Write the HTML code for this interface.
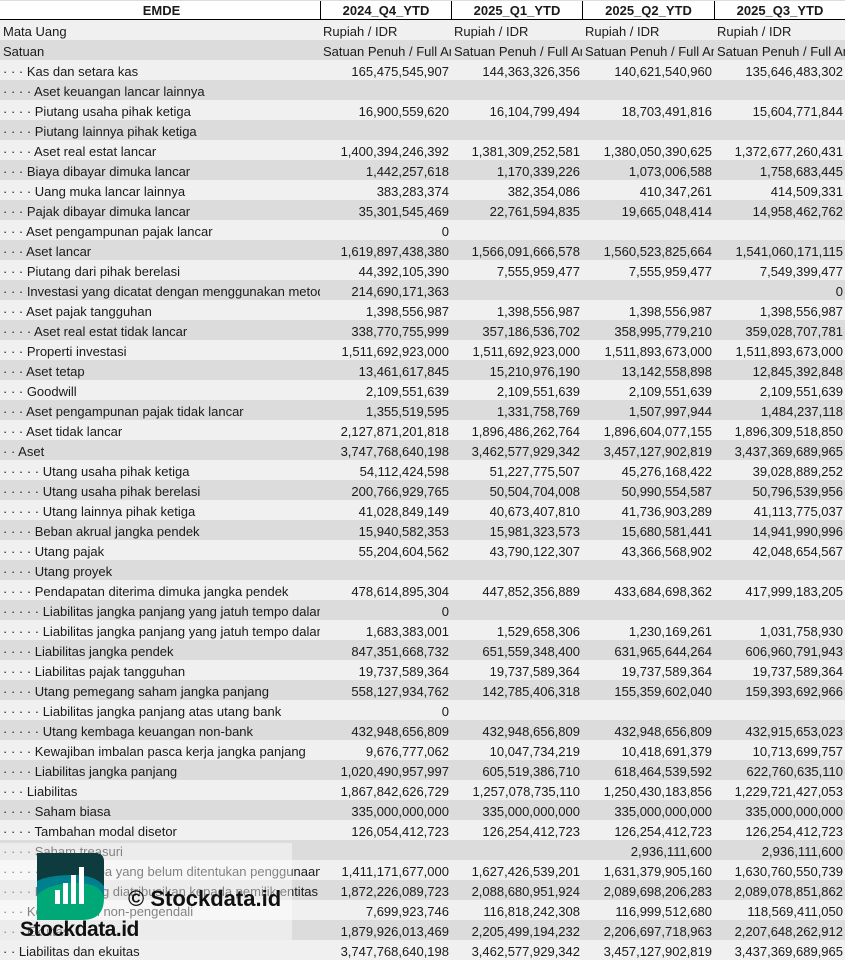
<!DOCTYPE html>
<html><head><meta charset="utf-8"><style>
*{margin:0;padding:0;box-sizing:border-box}
body{width:845px;height:961px;overflow:hidden;background:#fff;font-family:"Liberation Sans",sans-serif;font-size:13px;color:#1a1a1a;position:relative}
.r{position:absolute;left:0;width:845px;height:20px;display:flex}
.r div{height:20px;line-height:23px;overflow:hidden;white-space:nowrap}
.c0{width:320px;padding-left:3px}
.c1{width:131px}.c2{width:131px}.c3{width:132px}.c4{width:131px}
.n{text-align:right;padding-right:2px}
.l{background:#f0f0f0}.d{background:#dcdcdc}
.h{top:0;background:#fff;border-top:1px solid #ddd;border-bottom:1px solid #000;font-weight:bold}
.h div{text-align:center;line-height:20px;border-left:1px solid #000}
.h div:first-child{border-left:none}
.ov{position:absolute;left:0;top:843px;width:292px;height:97px;background:rgba(255,255,255,0.45)}
</style></head><body>
<div class="r h"><div class="c0">EMDE</div><div class="c1">2024_Q4_YTD</div><div class="c2">2025_Q1_YTD</div><div class="c3">2025_Q2_YTD</div><div class="c4">2025_Q3_YTD</div></div>
<div id="t"></div>
<script>
var R=[
["Mata Uang","Rupiah / IDR","Rupiah / IDR","Rupiah / IDR","Rupiah / IDR",1],
["Satuan","Satuan Penuh / Full Amount","Satuan Penuh / Full Amount","Satuan Penuh / Full Amount","Satuan Penuh / Full Amount",1],
["· · · Kas dan setara kas","165,475,545,907","144,363,326,356","140,621,540,960","135,646,483,302"],
["· · · · Aset keuangan lancar lainnya","","","",""],
["· · · · Piutang usaha pihak ketiga","16,900,559,620","16,104,799,494","18,703,491,816","15,604,771,844"],
["· · · · Piutang lainnya pihak ketiga","","","",""],
["· · · · Aset real estat lancar","1,400,394,246,392","1,381,309,252,581","1,380,050,390,625","1,372,677,260,431"],
["· · · Biaya dibayar dimuka lancar","1,442,257,618","1,170,339,226","1,073,006,588","1,758,683,445"],
["· · · · Uang muka lancar lainnya","383,283,374","382,354,086","410,347,261","414,509,331"],
["· · · Pajak dibayar dimuka lancar","35,301,545,469","22,761,594,835","19,665,048,414","14,958,462,762"],
["· · · Aset pengampunan pajak lancar","0","","",""],
["· · · Aset lancar","1,619,897,438,380","1,566,091,666,578","1,560,523,825,664","1,541,060,171,115"],
["· · · Piutang dari pihak berelasi","44,392,105,390","7,555,959,477","7,555,959,477","7,549,399,477"],
["· · · Investasi yang dicatat dengan menggunakan metode ekuitas","214,690,171,363","","","0"],
["· · · Aset pajak tangguhan","1,398,556,987","1,398,556,987","1,398,556,987","1,398,556,987"],
["· · · · Aset real estat tidak lancar","338,770,755,999","357,186,536,702","358,995,779,210","359,028,707,781"],
["· · · Properti investasi","1,511,692,923,000","1,511,692,923,000","1,511,893,673,000","1,511,893,673,000"],
["· · · Aset tetap","13,461,617,845","15,210,976,190","13,142,558,898","12,845,392,848"],
["· · · Goodwill","2,109,551,639","2,109,551,639","2,109,551,639","2,109,551,639"],
["· · · Aset pengampunan pajak tidak lancar","1,355,519,595","1,331,758,769","1,507,997,944","1,484,237,118"],
["· · · Aset tidak lancar","2,127,871,201,818","1,896,486,262,764","1,896,604,077,155","1,896,309,518,850"],
["· · Aset","3,747,768,640,198","3,462,577,929,342","3,457,127,902,819","3,437,369,689,965"],
["· · · · · Utang usaha pihak ketiga","54,112,424,598","51,227,775,507","45,276,168,422","39,028,889,252"],
["· · · · · Utang usaha pihak berelasi","200,766,929,765","50,504,704,008","50,990,554,587","50,796,539,956"],
["· · · · · Utang lainnya pihak ketiga","41,028,849,149","40,673,407,810","41,736,903,289","41,113,775,037"],
["· · · · Beban akrual jangka pendek","15,940,582,353","15,981,323,573","15,680,581,441","14,941,990,996"],
["· · · · Utang pajak","55,204,604,562","43,790,122,307","43,366,568,902","42,048,654,567"],
["· · · · Utang proyek","","","",""],
["· · · · Pendapatan diterima dimuka jangka pendek","478,614,895,304","447,852,356,889","433,684,698,362","417,999,183,205"],
["· · · · · Liabilitas jangka panjang yang jatuh tempo dalam","0","","",""],
["· · · · · Liabilitas jangka panjang yang jatuh tempo dalam","1,683,383,001","1,529,658,306","1,230,169,261","1,031,758,930"],
["· · · · Liabilitas jangka pendek","847,351,668,732","651,559,348,400","631,965,644,264","606,960,791,943"],
["· · · · Liabilitas pajak tangguhan","19,737,589,364","19,737,589,364","19,737,589,364","19,737,589,364"],
["· · · · Utang pemegang saham jangka panjang","558,127,934,762","142,785,406,318","155,359,602,040","159,393,692,966"],
["· · · · · Liabilitas jangka panjang atas utang bank","0","","",""],
["· · · · · Utang kembaga keuangan non-bank","432,948,656,809","432,948,656,809","432,948,656,809","432,915,653,023"],
["· · · · Kewajiban imbalan pasca kerja jangka panjang","9,676,777,062","10,047,734,219","10,418,691,379","10,713,699,757"],
["· · · · Liabilitas jangka panjang","1,020,490,957,997","605,519,386,710","618,464,539,592","622,760,635,110"],
["· · · Liabilitas","1,867,842,626,729","1,257,078,735,110","1,250,430,183,856","1,229,721,427,053"],
["· · · · Saham biasa","335,000,000,000","335,000,000,000","335,000,000,000","335,000,000,000"],
["· · · · Tambahan modal disetor","126,054,412,723","126,254,412,723","126,254,412,723","126,254,412,723"],
["· · · · Saham treasuri","","","2,936,111,600","2,936,111,600"],
["· · · · · · Saldo laba yang belum ditentukan penggunaannya","1,411,171,677,000","1,627,426,539,201","1,631,379,905,160","1,630,760,550,739"],
["· · · · Ekuitas yang diatribusikan kepada pemilik entitas induk","1,872,226,089,723","2,088,680,951,924","2,089,698,206,283","2,089,078,851,862"],
["· · · Kepentingan non-pengendali","7,699,923,746","116,818,242,308","116,999,512,680","118,569,411,050"],
["· · · Ekuitas","1,879,926,013,469","2,205,499,194,232","2,206,697,718,963","2,207,648,262,912"],
["· · Liabilitas dan ekuitas","3,747,768,640,198","3,462,577,929,342","3,457,127,902,819","3,437,369,689,965"]];
var h="";
R.forEach(function(r,i){var cl=i%2?"d":"l";var n=r[5]?"":" n";
h+='<div class="r '+cl+'" style="top:'+(20+i*20)+'px"><div class="c0">'+r[0]+'</div><div class="c1'+n+'" style="padding-left:3px">'+r[1]+'</div><div class="c2'+n+'" style="padding-left:3px">'+r[2]+'</div><div class="c3'+n+'" style="padding-left:3px">'+r[3]+'</div><div class="c4'+n+'" style="padding-left:3px">'+r[4]+'</div></div>';});
document.getElementById("t").innerHTML=h;
</script>
<div class="ov"></div>
<svg style="position:absolute;left:37px;top:853px" width="67" height="67" viewBox="0 0 67 67">
<defs><clipPath id="cp"><path d="M0 0H58Q67 0 67 9V45Q67 67 45 67H0Z"/></clipPath></defs>
<g clip-path="url(#cp)">
<rect width="67" height="67" fill="#00a878"/>
<path d="M0 0H67V45Q64 30 40 30Q12 30 0 42Z" fill="#007f8f"/>
<path d="M0 0H67V33Q58 22 36 22Q12 22 0 28Z" fill="#0e3b3d"/>
</g>
<rect x="18" y="37" width="5" height="14" fill="#fff"/>
<rect x="26" y="30" width="5" height="21" fill="#fff"/>
<rect x="34" y="22" width="5" height="29" fill="#fff"/>
<rect x="42" y="14" width="5" height="37" fill="#fff"/>
</svg>
<div style="position:absolute;left:128px;top:886px;font-weight:bold;font-size:22px;color:#111">© Stockdata.id</div>
<div style="position:absolute;left:20px;top:918px;font-weight:bold;font-size:21px;color:#111;letter-spacing:-0.5px">Stockdata.id</div>
</body></html>
